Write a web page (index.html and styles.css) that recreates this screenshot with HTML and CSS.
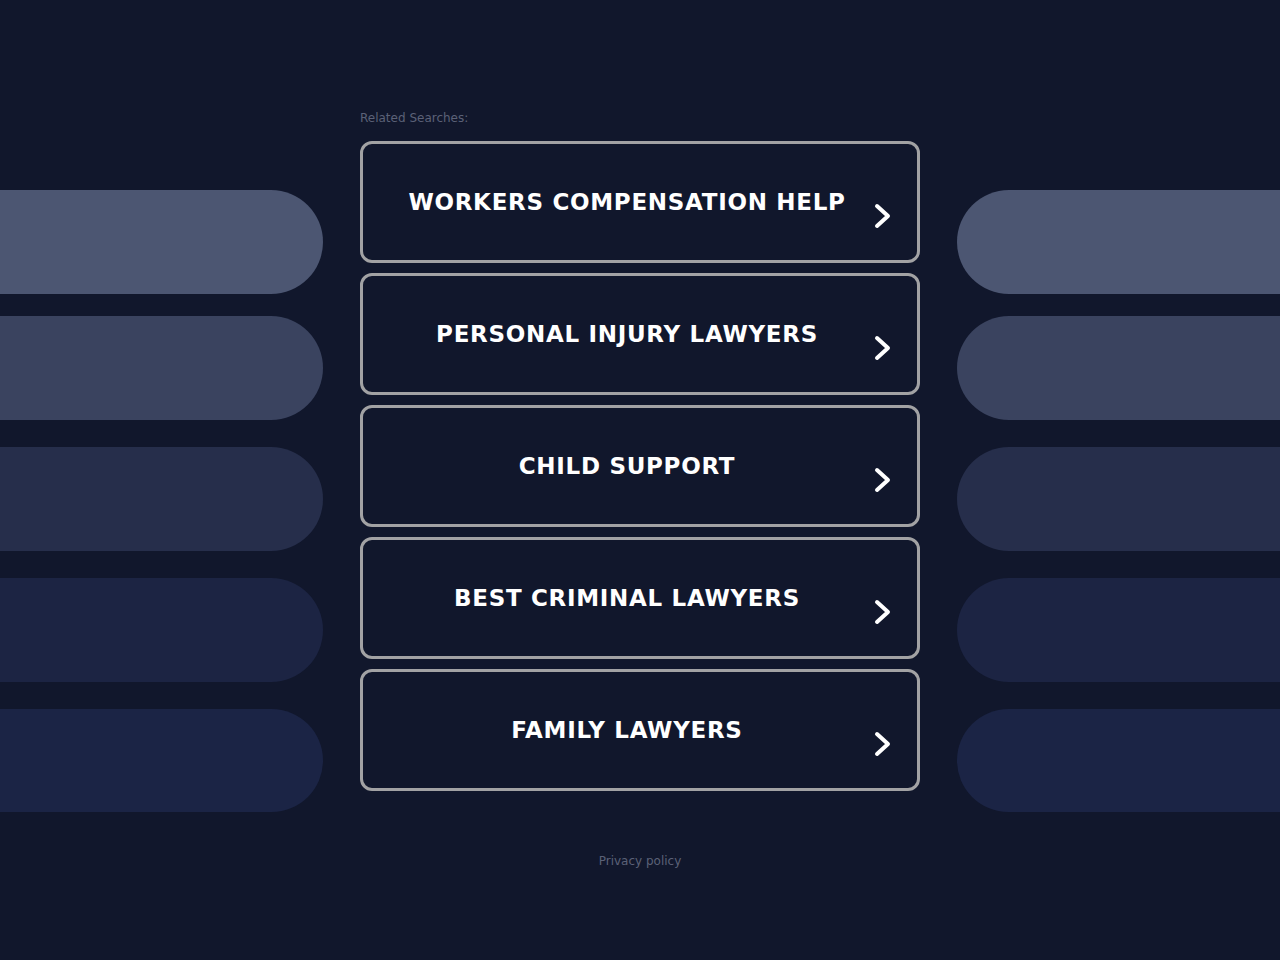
FILE: index.html
```html
<!DOCTYPE html>
<html>
<head>
<meta charset="utf-8">
<link rel="stylesheet" href="styles.css">
</head>
<body>
<div class="page">
  <div class="side side-left">
    <div class="pill p1"></div>
    <div class="pill p2"></div>
    <div class="pill p3"></div>
    <div class="pill p4"></div>
    <div class="pill p5"></div>
  </div>
  <div class="center">
    <div class="label">Related Searches:</div>
    <div class="list">
      <a class="item" href="#"><span class="txt">WORKERS COMPENSATION HELP</span><svg class="chev" viewBox="0 0 20 26"><path d="M4 3 L15 13 L4 23" fill="none" stroke="#fff" stroke-width="4" stroke-linecap="round" stroke-linejoin="round"/></svg></a>
      <a class="item" href="#"><span class="txt">PERSONAL INJURY LAWYERS</span><svg class="chev" viewBox="0 0 20 26"><path d="M4 3 L15 13 L4 23" fill="none" stroke="#fff" stroke-width="4" stroke-linecap="round" stroke-linejoin="round"/></svg></a>
      <a class="item" href="#"><span class="txt">CHILD SUPPORT</span><svg class="chev" viewBox="0 0 20 26"><path d="M4 3 L15 13 L4 23" fill="none" stroke="#fff" stroke-width="4" stroke-linecap="round" stroke-linejoin="round"/></svg></a>
      <a class="item" href="#"><span class="txt">BEST CRIMINAL LAWYERS</span><svg class="chev" viewBox="0 0 20 26"><path d="M4 3 L15 13 L4 23" fill="none" stroke="#fff" stroke-width="4" stroke-linecap="round" stroke-linejoin="round"/></svg></a>
      <a class="item" href="#"><span class="txt">FAMILY LAWYERS</span><svg class="chev" viewBox="0 0 20 26"><path d="M4 3 L15 13 L4 23" fill="none" stroke="#fff" stroke-width="4" stroke-linecap="round" stroke-linejoin="round"/></svg></a>
    </div>
    <div class="footer"><a href="#" class="privacy">Privacy policy</a></div>
  </div>
  <div class="side side-right">
    <div class="pill p1"></div>
    <div class="pill p2"></div>
    <div class="pill p3"></div>
    <div class="pill p4"></div>
    <div class="pill p5"></div>
  </div>
</div>
</body>
</html>
```
FILE: styles.css
```css
html, body {
  margin: 0;
  padding: 0;
  background: #11172c;
  font-family: "DejaVu Sans", "Liberation Sans", sans-serif;
}
.page {
  display: flex;
  justify-content: space-between;
  width: 1280px;
  height: 960px;
}
.side {
  width: 323px;
  padding-top: 190px;
  display: flex;
  flex-direction: column;
  gap: 27px;
}
.pill {
  height: 104px;
}
.side .p2 { margin-top: -5px; }
.side .p5 { height: 103px; }
.side-left .pill { border-radius: 0 52px 52px 0; }
.side-right .pill { border-radius: 52px 0 0 52px; }
.p1 { background: #4c5672; }
.p2 { background: #3a435f; }
.p3 { background: #262e4b; }
.p4 { background: #1c2443; }
.p5 { background: #1b2445; }
.center {
  width: 560px;
  padding-top: 111px;
}
.label {
  font-size: 12px;
  color: #5b6177;
  line-height: 14px;
  height: 30px;
}
.list {
  display: flex;
  flex-direction: column;
  gap: 10px;
}
.item {
  position: relative;
  display: flex;
  justify-content: center;
  box-sizing: border-box;
  height: 122px;
  border: 3px solid #a2a2a4;
  border-radius: 12px;
  text-decoration: none;
  background: #11172c;
}
.txt {
  margin-top: 44px;
  margin-right: 26px;
  font-weight: bold;
  font-size: 23px;
  line-height: 28px;
  letter-spacing: 0.7px;
  color: #ffffff;
  height: 28px;
}
.chev {
  position: absolute;
  right: 24px;
  top: 59px;
  width: 20px;
  height: 26px;
}
.footer {
  margin-top: 59px;
  text-align: center;
}
.privacy {
  font-size: 12px;
  color: #5b6177;
  text-decoration: none;
}
```
